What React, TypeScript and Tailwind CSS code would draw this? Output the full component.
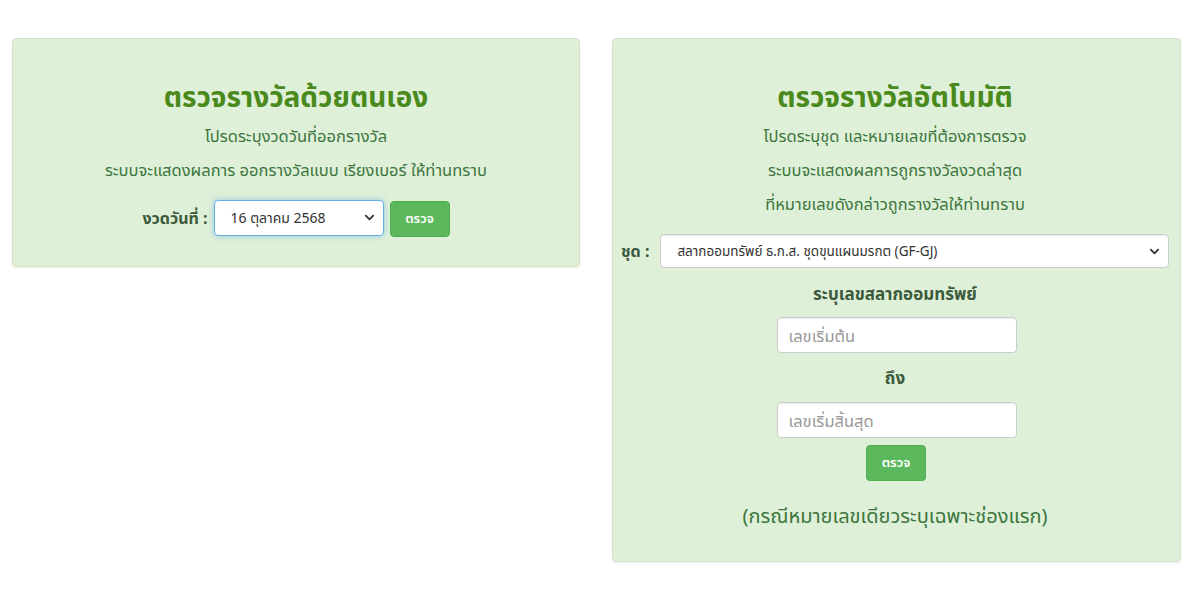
import React from 'react';

const font = { fontFamily: '"Noto Sans", "Noto Sans Thai", "DejaVu Sans", sans-serif' };

const GreenButton: React.FC<{ className?: string }> = ({ className = '' }) => (
  <button
    className={`h-9 w-[60px] rounded bg-[#5cb85c] border border-[#4cae4c] text-white text-[13px] font-semibold ${className}`}
  >
    ตรวจ
  </button>
);

const Chevron = () => (
  <svg width="11" height="11" viewBox="0 0 12 12" className="text-[#333]">
    <path d="M2 4l4 4 4-4" fill="none" stroke="currentColor" strokeWidth="2" strokeLinecap="round" strokeLinejoin="round" />
  </svg>
);

export default function App() {
  return (
    <div className="w-[1200px] h-[594px] bg-white" style={font}>
      <div className="flex items-start gap-8 pl-3 pt-[38px]">
        {/* Left: manual check */}
        <div className="w-[568px] h-[229px] rounded bg-[#dff0d8] border border-[#d3e6c9] shadow-[0_1px_2px_rgba(0,0,0,0.08)] flex flex-col items-center pt-[40px]">
          <h2 className="text-[28px] leading-[34px] font-bold text-[#4a8a1c]">ตรวจรางวัลด้วยตนเอง</h2>
          <p className="mt-[11px] text-[16.5px] leading-[24px] text-[#3c763d]">โปรดระบุงวดวันที่ออกรางวัล</p>
          <p className="mt-[10px] text-[16.5px] leading-[24px] text-[#3c763d]">
            ระบบจะแสดงผลการ ออกรางวัลแบบ เรียงเบอร์ ให้ท่านทราบ
          </p>
          <div className="mt-[16px] flex items-center">
            <span className="text-[16px] font-bold text-[#3c5a3c] mr-[6px]">งวดวันที่ :</span>
            <div className="h-[36px] w-[170px] rounded bg-white border border-[#66afe9] shadow-[0_0_6px_rgba(102,175,233,0.6)] flex items-center justify-between pl-4 pr-2">
              <span className="text-[14px] text-[#333]">16 ตุลาคม 2568</span>
              <Chevron />
            </div>
            <GreenButton className="ml-[6px] w-[59px] mt-[3px]" />
          </div>
        </div>

        {/* Right: automatic check */}
        <div className="w-[569px] h-[524px] rounded bg-[#dff0d8] border border-[#d3e6c9] shadow-[0_1px_2px_rgba(0,0,0,0.08)] flex flex-col items-center pt-[40px] pl-2 pr-[11px]">
          <h2 className="text-[28px] leading-[34px] font-bold text-[#4a8a1c]">ตรวจรางวัลอัตโนมัติ</h2>
          <p className="mt-[11px] text-[16.5px] leading-[24px] text-[#3c763d]">โปรดระบุชุด และหมายเลขที่ต้องการตรวจ</p>
          <p className="mt-[10px] text-[16.5px] leading-[24px] text-[#3c763d]">ระบบจะแสดงผลการถูกรางวัลงวดล่าสุด</p>
          <p className="mt-[10px] text-[16.5px] leading-[24px] text-[#3c763d]">ที่หมายเลขดังกล่าวถูกรางวัลให้ท่านทราบ</p>
          <div className="mt-[18px] w-full flex items-center">
            <span className="text-[16px] font-bold text-[#3c5a3c] mr-[11px] whitespace-nowrap">ชุด :</span>
            <div className="h-[34px] flex-1 rounded bg-white border border-[#ccc] shadow-[inset_0_1px_1px_rgba(0,0,0,0.075)] flex items-center justify-between pl-4 pr-2">
              <span className="text-[13.5px] text-[#333]">สลากออมทรัพย์ ธ.ก.ส. ชุดขุนแผนมรกต (GF-GJ)</span>
              <Chevron />
            </div>
          </div>
          <div className="mt-[14px] text-[17px] leading-[24px] font-bold text-[#3c5a3c]">ระบุเลขสลากออมทรัพย์</div>
          <input
            placeholder="เลขเริ่มต้น"
            className="mt-[11px] ml-[3px] h-[36px] w-[240px] rounded bg-white border border-[#ccc] shadow-[inset_0_1px_1px_rgba(0,0,0,0.075)] px-[11px] text-[16.5px] text-[#333] placeholder:text-[#999] outline-none"
          />
          <div className="mt-[13px] text-[17px] leading-[24px] font-bold text-[#3c5a3c]">ถึง</div>
          <input
            placeholder="เลขเริ่มสิ้นสุด"
            className="mt-[12px] ml-[3px] h-[36px] w-[240px] rounded bg-white border border-[#ccc] shadow-[inset_0_1px_1px_rgba(0,0,0,0.075)] px-[11px] text-[16.5px] text-[#333] placeholder:text-[#999] outline-none"
          />
          <GreenButton className="mt-[7px] ml-[2px]" />
          <p className="mt-[21px] text-[20px] leading-[28px] text-[#3c763d]">(กรณีหมายเลขเดียวระบุเฉพาะช่องแรก)</p>
        </div>
      </div>
    </div>
  );
}
